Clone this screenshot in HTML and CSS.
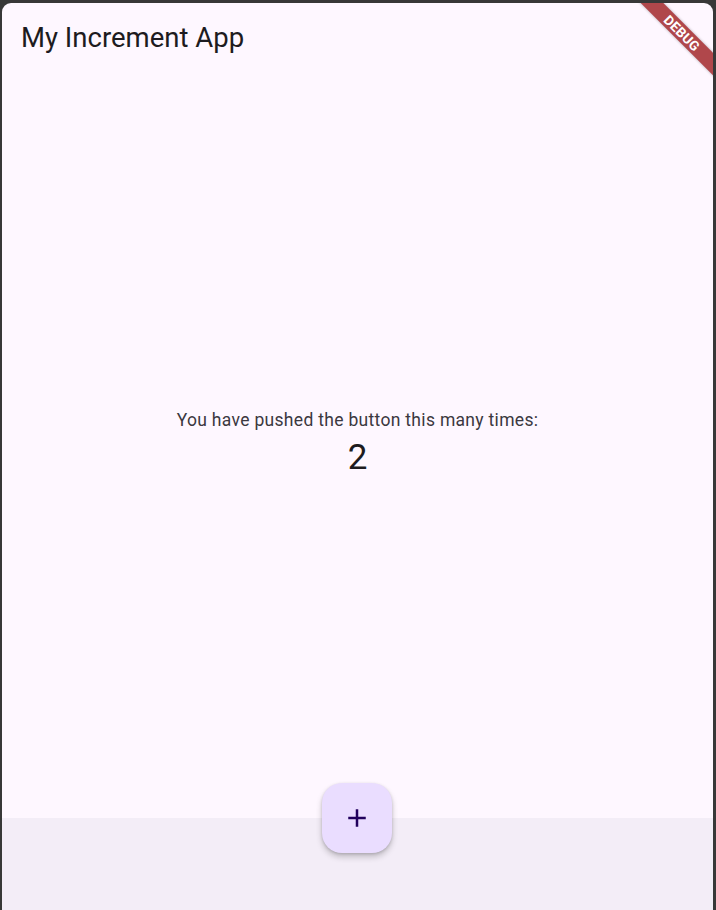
FILE: index.html
```html
<!DOCTYPE html>
<html>
<head>
<meta charset="utf-8">
<link rel="stylesheet" href="styles.css">
</head>
<body>
<div class="window">
  <header class="appbar">
    <h1 class="title">My Increment App</h1>
  </header>
  <main class="content">
    <p class="label">You have pushed the button this many times:</p>
    <p class="count">2</p>
  </main>
  <footer class="bottombar"></footer>
  <button class="fab" aria-label="Increment">
    <svg width="30" height="30" viewBox="0 0 24 24"><path d="M19 13h-6v6h-2v-6H5v-2h6V5h2v6h6v2z" fill="#21005d"/></svg>
  </button>
  <div class="banner"><span>DEBUG</span></div>
</div>
</body>
</html>
```
FILE: styles.css
```css
html, body {
  margin: 0;
  padding: 0;
  height: 100%;
}
body {
  background: #383838;
  font-family: Roboto, "Noto Sans", sans-serif;
  padding: 3px 3px 0 2px;
  box-sizing: border-box;
}
.window {
  position: relative;
  height: 907px;
  border-radius: 9px 9px 0 0;
  overflow: hidden;
  background: #fef7ff;
  display: flex;
  flex-direction: column;
}
.appbar {
  height: 80px;
  display: flex;
  align-items: center;
  padding: 0 19px;
  flex: none;
}
.title {
  margin: 0;
  font-weight: 400;
  font-size: 27.5px;
  color: #1d1b20;
  margin-top: -11px;
}
.content {
  flex: 1;
  display: flex;
  flex-direction: column;
  align-items: center;
  justify-content: center;
  padding-bottom: 15px;
}
.label {
  margin: 0;
  font-size: 17.5px;
  letter-spacing: 0.31px;
  line-height: 25px;
  color: #3b3840;
}
.count {
  margin: 2px 0 -2px;
  font-size: 35px;
  line-height: 45px;
  color: #1d1b20;
}
.bottombar {
  height: 92px;
  flex: none;
  background: #f3edf7;
}
.fab {
  position: absolute;
  left: 320px;
  top: 780px;
  width: 70px;
  height: 70px;
  border: none;
  border-radius: 20px;
  background: #eaddff;
  box-shadow: 0 4px 6px rgba(0,0,0,0.2), 0 1px 3px rgba(0,0,0,0.15);
  display: flex;
  align-items: center;
  justify-content: center;
  padding: 0;
}
.banner {
  position: absolute;
  top: 22px;
  right: -34px;
  width: 130px;
  height: 16px;
  background: #b0474b;
  transform: rotate(45deg);
  display: flex;
  align-items: center;
  justify-content: center;
  box-shadow: 0 0 3px rgba(0,0,0,0.3);
}
.banner span {
  color: #fff;
  font-weight: 700;
  font-size: 13.5px;
  letter-spacing: 0.2px;
}
```
